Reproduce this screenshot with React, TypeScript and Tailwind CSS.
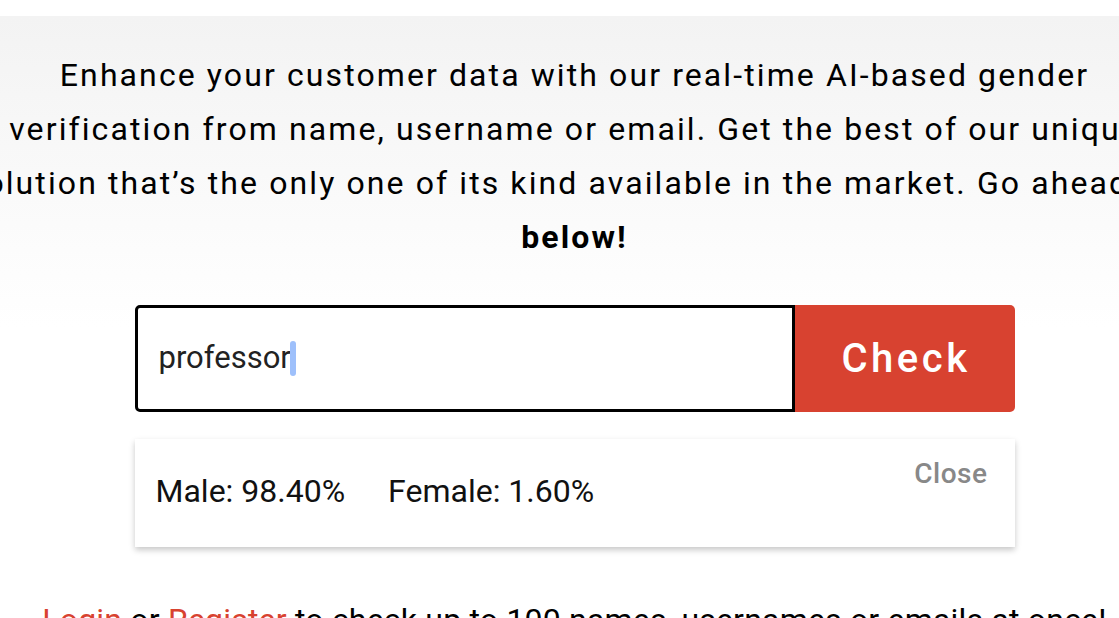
import React from 'react';

const App: React.FC = () => {
  return (
    <div className="w-full h-[618px] overflow-hidden bg-white font-['Roboto',sans-serif] text-black">
      <div className="h-4 bg-white" />
      <section className="bg-gradient-to-b from-[#f3f3f3] via-white to-white pl-[30px] flex flex-col items-center">
        {/* Intro copy */}
        <p className="mt-8 whitespace-nowrap text-center text-[32px] leading-[54px] tracking-[2.1px]">
          Enhance your customer data with our real-time AI-based gender
          <br />
          verification from name, username or email. Get the best of our unique
          <br />
          solution that’s the only one of its kind available in the market. Go ahead try
          <br />
          <b className="font-bold">below!</b>
        </p>

        {/* Search */}
        <div className="mt-[41px] flex w-[880px] h-[107px]">
          <div className="flex-1 flex items-center border-[3px] border-black rounded-l-[5px] bg-white pl-[21px]">
            <span className="text-[31px] text-[#222]">professor</span>
            <span className="inline-block w-[6px] h-[35px] bg-[#9ec0fb] rounded-[3px] -ml-[1px]" />
          </div>
          <button className="w-[220px] bg-[#d84230] rounded-r-[5px] text-white text-[40px] font-medium tracking-[3.5px] pl-[3px]">
            Check
          </button>
        </div>

        {/* Result */}
        <div className="mt-[27px] w-[880px] h-[108px] bg-white shadow-[0_3px_6px_rgba(0,0,0,0.22)] flex justify-between pl-[21px] pr-[27px]">
          <div className="self-center flex gap-[43px] text-[32px] text-[#111] -mt-[4px]">
            <span>Male: 98.40%</span>
            <span>Female: 1.60%</span>
          </div>
          <button className="self-start mt-[14px] text-[28px] font-medium text-[#888] tracking-[0.5px]">Close</button>
        </div>

        <p className="mt-[55px] whitespace-nowrap text-center text-[32px] leading-[36px] tracking-[0.2px]">
          <a className="text-[#d84230]">Login</a> or <a className="text-[#d84230]">Register</a> to check up to 100 names, usernames or emails at once!
        </p>
      </section>
    </div>
  );
};

export default App;
